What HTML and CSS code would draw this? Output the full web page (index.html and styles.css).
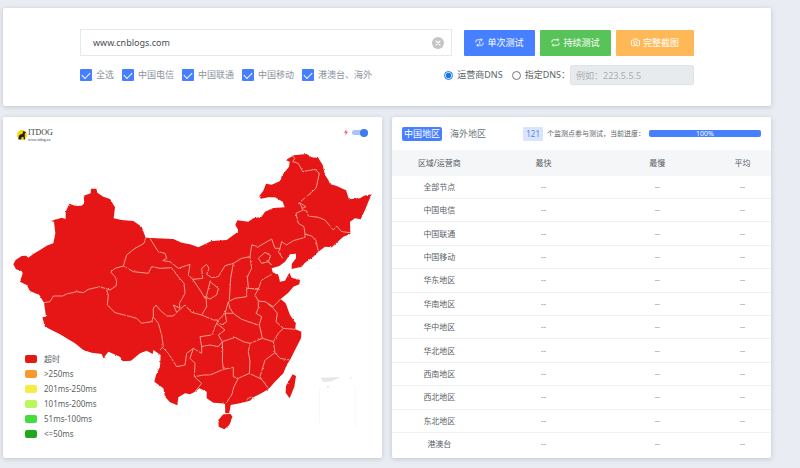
FILE: index.html
```html
<!DOCTYPE html>
<html lang="zh-CN">
<head>
<meta charset="utf-8">
<meta name="viewport" content="width=device-width, initial-scale=1">
<title>ITDOG</title>
<link rel="stylesheet" href="styles.css">
</head>
<body>
<main class="page">
  <form class="card search">
    <div class="search-row">
      <div class="url-field">
        <input class="url-input" type="text" value="www.cnblogs.com" aria-label="URL">
        <button class="clear" type="button" aria-label="clear">
          <svg viewBox="0 0 12 12"><circle cx="6" cy="6" r="6" fill="#c4c4c4"/><path d="M4 4l4 4M8 4l-4 4" stroke="#fff" stroke-width="1.1" stroke-linecap="round"/></svg>
        </button>
      </div>
      <div class="actions">
        <button class="btn btn-blue" type="button">
          <svg class="icon" viewBox="0 0 20 20"><path d="M2 10V7q0-3 3-3h11M13 1l3 3-3 3M18 10v3q0 3-3 3H4M7 19l-3-3 3-3M9 9l1.500-1v5"/></svg>单次测试</button>
        <button class="btn btn-green" type="button">
          <svg class="icon" viewBox="0 0 20 20"><path d="M2 10V7q0-3 3-3h12M14 1l3 3-3 3M18 10v3q0 3-3 3H3M6 19l-3-3 3-3"/></svg>持续测试</button>
        <button class="btn btn-orange" type="button">
          <svg class="icon" viewBox="0 0 20 20"><path d="M3 5h3l1-3h6l1 3h3q2 0 2 2v8q0 2-2 2H3q-2 0-2-2V7q0-2 2-2z"/><circle cx="10" cy="11" r="3.500"/></svg>完整截图</button>
      </div>
    </div>
    <div class="option-row">
      <div class="checks">
        <label><input type="checkbox" checked>全选</label>
        <label><input type="checkbox" checked>中国电信</label>
        <label><input type="checkbox" checked>中国联通</label>
        <label><input type="checkbox" checked>中国移动</label>
        <label><input type="checkbox" checked>港澳台、海外</label>
      </div>
      <div class="dns">
        <label><input type="radio" name="dns" checked>运营商DNS</label>
        <label><input type="radio" name="dns">指定DNS：</label>
        <input class="dns-input" type="text" placeholder="例如：223.5.5.5" aria-label="DNS" disabled>
      </div>
    </div>
  </form>

  <div class="columns">
    <section class="card map-card">
      <svg class="map" viewBox="9 351 1137 1023" aria-hidden="true">
        <defs>
          <filter id="rough" filterUnits="userSpaceOnUse" x="9" y="351" width="1137" height="1023">
            <feTurbulence type="fractalNoise" baseFrequency="0.16" numOctaves="2" seed="4" result="n"/>
            <feDisplacementMap in="SourceGraphic" in2="n" scale="6" xChannelSelector="R" yChannelSelector="G"/>
          </filter>
        </defs>
        <g filter="url(#rough)">
          <path class="land" d="M40 793L47 780 65 768 78 767 85 773 100 762 120 750 140 737 160 730 166 700 162 665 153 663 185 653 197 657 197 635 208 611 225 617 245 617 253 610 251 587 272 580 273 566 289 566 292 578 310 590 330 597 345 622 341 655 365 660 400 663 425 680 437 713 520 717 545 728 570 733 595 742 635 723 680 720 710 698 716 692 706 675 712 661 745 665 760 655 785 650 795 635 820 624 854 622 848 605 825 592 805 592 782 596 778 588 790 572 798 551 815 554 842 542 845 528 867 500 869 485 857 480 882 466 920 462 935 472 955 474 968 495 975 525 985 540 990 552 1010 558 1038 571 1047 598 1080 595 1092 587 1115 583 1105 605 1095 630 1082 658 1065 655 1050 665 1051 702 1030 710 1010 728 995 742 975 740 955 755 940 770 915 788 905 800 875 807 875 792 888 775 888 761 870 763 855 785 838 798 815 805 818 817 835 825 840 845 855 842 868 818 875 833 900 840 898 853 880 860 865 878 842 897 857 910 870 945 887 970 886 988 904 995 903 1015 890 1040 870 1080 860 1095 850 1120 825 1145 805 1168 780 1182 760 1192 750 1202 720 1210 692 1215 688 1240 676 1240 675 1212 665 1210 640 1208 620 1195 620 1175 598 1165 585 1175 570 1183 555 1180 535 1192 532 1216 510 1207 495 1190 490 1165 463 1145 468 1125 480 1100 482 1065 460 1050 458 1062 440 1052 420 1060 393 1082 368 1084 360 1070 325 1055 310 1075 305 1062 275 1058 250 1050 225 1030 180 1003 135 980 127 952 138 950 132 908 118 885 90 873 80 855 60 845 68 820 65 813 48 808Z"/>
          <path class="land" d="M655 1260L670 1243 692 1242 697 1250 688 1275 673 1288 656 1280Z"/>
          <path class="land" d="M878 1123L888 1128 883 1160 869 1195 857 1178 858 1158Z"/>
          <path class="border" d="M437 713L432 730 405 745 380 765 370 798 345 805 332 816 345 830 350 845 348 858 330 870 300 860 265 868 250 878 230 875 200 882 188 888 160 888 150 905 132 908
            M320 870L325 885 322 915 345 938 385 948 410 955 425 970 435 968 455 965 460 950 475 970 485 1005 490 1040 480 1050
            M460 950L460 925 468 915 480 930 500 948 520 948 530 937
            M370 798L400 815 445 820 455 800 480 805 515 803 535 830 552 850 555 880 538 910 540 925 520 915 530 937 555 915 575 937 605 945
            M450 715L465 740 475 755 495 760 500 775 488 782 510 785 535 805 570 793 565 825 578 838 608 835 605 805 620 793 627 805 620 823 635 833 655 830 675 797 700 790 725 775 750 770 755 735 775 740 815 717 825 745 840 745 845 725 860 735 880 722 915 712 915 702
            M915 702L912 680 895 670 888 640 910 630 920 633 925 648 955 652 975 660 1000 690 1010 678 1025 695 1050 698
            M875 466L885 475 878 485 895 490 908 515 945 508 958 520 948 565 925 585 898 608 910 630
            M898 608L918 620 905 626M915 702L935 708 948 722 955 755M840 745L835 755 848 775
            M775 775L795 757 812 767 805 785 785 790ZM805 785L815 795 800 780
            M750 770L755 805 742 830 745 865 775 867 785 840 815 823M775 867L740 865 740 890 705 895 685 905
            M700 790L692 835 688 900M775 867L765 885 775 903 795 905 820 920 842 897
            M578 838L600 870 615 895 620 885 630 845 655 865 650 885 630 897 612 890M618 890L620 920 605 945 640 960 655 960 675 940 685 905
            M685 905L690 925 700 940 675 940 680 965 665 975 650 960M700 940L725 958 775 975
            M775 903L775 925 768 940 785 950 778 975 785 1005 787 1015 820 1025 835 1000 850 985 886 988M802 910L820 925 832 940 828 965 850 985
            M655 960L650 970 675 990 655 1005 667 1025 705 1012 730 1025 750 1030 787 1015
            M650 970L635 1005 600 1010 605 1040 630 1035 655 1040 667 1025 668 1055 667 1080 670 1108 630 1125 610 1125 585 1130
            M750 1030L745 1055 750 1085 748 1120M670 1108L700 1102 700 1130 715 1135 748 1120 785 1138 805 1165
            M715 1135L702 1160 695 1185 678 1210M785 1138L780 1130 795 1080 825 1058 820 1025M825 1058L840 1075 868 1080
            M485 1040L505 1060 530 1100 555 1095 560 1060 580 1045 605 1060 605 1040M580 1045L570 1075 585 1090 583 1130 605 1150 585 1175M740 1198L755 1190 762 1198"/>
        </g>
        <path class="sea" d="M961 1133L1020 1131 998 1144 970 1146ZM981 1158h6v5h-6zM1050 1131h4v5h-4z"/>
        <path class="sea-frame" d="M959 1160v110M1066 1160v120"/>
      </svg>

      <div class="brand">
        <svg viewBox="0 0 22 22"><circle cx="11" cy="11" r="11" fill="#f4d911"/><path d="M3 21l1-8 3-3 5-1 1-5 2-2 2 2 3 1-3 3v6l1 7h-3l-1-6-4 1-1 5z" fill="#241f16"/></svg>
        <span class="brand-text"><b>ITDOG</b><small>www.itdog.cn</small></span>
      </div>

      <label class="toggle">
        <svg viewBox="0 0 6 10"><path d="M3.500 0L0 5.500h2.500L2 10l4-6H3.500z" fill="#f0606c"/></svg>
        <input type="checkbox" role="switch" aria-label="switch" checked>
      </label>

      <ul class="legend">
        <li><i class="swatch timeout"></i>超时</li>
        <li><i class="swatch over250"></i>&gt;250ms</li>
        <li><i class="swatch to250"></i>201ms-250ms</li>
        <li><i class="swatch to200"></i>101ms-200ms</li>
        <li><i class="swatch to100"></i>51ms-100ms</li>
        <li><i class="swatch to50"></i>&lt;=50ms</li>
      </ul>
    </section>

    <section class="card stats">
      <header class="stats-head">
        <nav class="tabs">
          <a class="tab active" href="#cn">中国地区</a>
          <a class="tab" href="#global">海外地区</a>
        </nav>
        <div class="progress-info">
          <span class="count">121</span>
          <span>个监测点参与测试，当前进度：</span>
          <div class="progress" role="progressbar" aria-valuenow="100">100%</div>
        </div>
      </header>
      <table>
        <thead><tr><th>区域/运营商</th><th>最快</th><th>最慢</th><th>平均</th></tr></thead>
        <tbody>
          <tr><td>全部节点</td><td>--</td><td>--</td><td>--</td></tr>
          <tr><td>中国电信</td><td>--</td><td>--</td><td>--</td></tr>
          <tr><td>中国联通</td><td>--</td><td>--</td><td>--</td></tr>
          <tr><td>中国移动</td><td>--</td><td>--</td><td>--</td></tr>
          <tr><td>华东地区</td><td>--</td><td>--</td><td>--</td></tr>
          <tr><td>华南地区</td><td>--</td><td>--</td><td>--</td></tr>
          <tr><td>华中地区</td><td>--</td><td>--</td><td>--</td></tr>
          <tr><td>华北地区</td><td>--</td><td>--</td><td>--</td></tr>
          <tr><td>西南地区</td><td>--</td><td>--</td><td>--</td></tr>
          <tr><td>西北地区</td><td>--</td><td>--</td><td>--</td></tr>
          <tr><td>东北地区</td><td>--</td><td>--</td><td>--</td></tr>
          <tr><td>港澳台</td><td>--</td><td>--</td><td>--</td></tr>
        </tbody>
      </table>
    </section>
  </div>
</main>
</body>
</html>
```
FILE: styles.css
```css
* { box-sizing: border-box; }

body {
  margin: 0;
  background: #e9edf3;
  color: #5a5f66;
  font: 9px/12px "Noto Sans", "Noto Sans CJK SC", sans-serif;
}

button, input { font: inherit; }

.page {
  display: grid;
  gap: 11px;
  padding: 8px 29px 10px 3px;
}

.card {
  background: #fff;
  border-radius: 2px;
  box-shadow: 0 1px 5px rgba(60, 75, 100, 0.25);
}

/* Search form */
.search {
  display: grid;
  gap: 9px;
  padding: 21px 77px;
}

.search-row, .option-row, .actions, .checks, .dns {
  display: flex;
  align-items: center;
}

.search-row { gap: 12px; }

.url-field {
  position: relative;
  flex: 1;
  display: flex;
}

.url-input {
  width: 100%;
  height: 27px;
  padding: 0 12px;
  border: 1px solid #e6e8eb;
  color: #4a4f57;
}

.clear {
  position: absolute;
  right: 8px;
  top: 8px;
  width: 12px;
  height: 12px;
  padding: 0;
  border: 0;
  background: none;
}

.clear svg { display: block; }

.actions { gap: 5px; }

.btn {
  display: flex;
  align-items: center;
  justify-content: center;
  gap: 3px;
  width: 71px;
  height: 26px;
  padding: 0;
  border: 0;
  border-radius: 1px;
  color: #fff;
}

.btn-blue { background: #467fff; }
.btn-green { background: #58c358; }
.btn-orange { width: 78px; background: #ffb858; }

.icon {
  width: 9px;
  height: 9px;
  fill: none;
  stroke: #fff;
  stroke-width: 2;
}

.option-row { justify-content: space-between; }
.checks { gap: 8px; color: #8b949e; }
.dns { gap: 9px; }

.checks label, .dns label {
  display: flex;
  align-items: center;
  gap: 4px;
  white-space: nowrap;
}

.dns label + .dns-input { margin-left: -9px; }

.checks input {
  appearance: none;
  display: grid;
  place-items: center;
  width: 12px;
  height: 12px;
  margin: 0;
  border-radius: 1px;
  background: #467fff;
}

.checks input::before {
  content: "";
  width: 7px;
  height: 4px;
  margin-bottom: 2px;
  border: solid #fff;
  border-width: 0 0 1px 1px;
  transform: rotate(-45deg);
}

.dns input[type="radio"] {
  width: 9px;
  height: 9px;
  margin: 0;
  accent-color: #1673f0;
}

.dns-input {
  width: 124px;
  height: 20px;
  padding: 0 5px;
  border: 1px solid #dfe3e8;
  border-radius: 2px;
  background: #e8ebee;
}

.dns-input::placeholder { color: #a8adb4; }

/* Two-column area */
.columns {
  display: grid;
  grid-template-columns: 1fr 1fr;
  gap: 10px;
}

.map-card { position: relative; }

.map {
  display: block;
  width: 100%;
}

.land { fill: #e61812; }

.border {
  fill: none;
  stroke: #f59a90;
  stroke-width: 3;
  stroke-linejoin: round;
}

.sea { fill: #e7e7e7; }
.sea-frame { fill: none; stroke: #f8f8f8; stroke-width: 3; }

.brand {
  position: absolute;
  left: 14px;
  top: 11px;
  display: flex;
  align-items: center;
  gap: 1px;
}

.brand svg { width: 10px; height: 10px; }

.brand-text {
  display: grid;
  color: #3a3a3a;
  font-family: "Liberation Serif", serif;
}

.brand-text b { font-size: 8px; line-height: 9px; font-weight: 400; }
.brand-text small { font-size: 4px; line-height: 5px; }

.toggle {
  position: absolute;
  right: 14px;
  top: 12px;
  display: flex;
  align-items: center;
  gap: 4px;
}

.toggle svg { width: 4px; height: 7px; }

.toggle input {
  appearance: none;
  display: flex;
  align-items: center;
  justify-content: flex-end;
  width: 16px;
  height: 5px;
  margin: 0;
  border-radius: 3px;
  background: #a9c3fb;
}

.toggle input::before {
  content: "";
  width: 8px;
  height: 8px;
  border-radius: 50%;
  background: #3f78f2;
}

.legend {
  position: absolute;
  left: 22px;
  bottom: 18px;
  display: grid;
  gap: 3px;
  margin: 0;
  padding: 0;
  list-style: none;
  font-size: 8px;
}

.legend li {
  display: flex;
  align-items: center;
  gap: 7px;
}

.swatch {
  width: 12px;
  height: 8px;
  border-radius: 2px;
}

.timeout { background: #e61812; }
.over250 { background: #f7992f; }
.to250 { background: #f6ec45; }
.to200 { background: #b9f75d; }
.to100 { background: #44dd3e; }
.to50 { background: #20a81c; }

/* Statistics */
.stats {
  display: grid;
  grid-template-rows: auto 1fr;
  padding-bottom: 3px;
}

.stats-head {
  display: flex;
  align-items: center;
  justify-content: space-between;
  height: 33px;
  padding: 0 10px;
}

.tabs { display: flex; gap: 6px; }

.tab {
  padding: 1px 2px;
  border-radius: 2px;
  color: #6b7178;
  text-decoration: none;
}

.tab.active { background: #467fff; color: #fff; }

.progress-info {
  display: flex;
  align-items: center;
  gap: 4px;
  font-size: 7px;
  white-space: nowrap;
}

.count {
  padding: 1px 3px;
  border-radius: 1px;
  background: #d9e5ff;
  color: #5e86dd;
  font-size: 8px;
}

.progress {
  width: 112px;
  height: 7px;
  border-radius: 2px;
  background: #467fff;
  color: #fff;
  line-height: 7px;
  text-align: center;
}

table {
  width: 100%;
  height: 100%;
  border-collapse: collapse;
  table-layout: fixed;
  font-size: 8px;
  line-height: 12px;
  text-align: center;
}

th, td { padding: 0; }
th { height: 26px; background: #f5f6f7; font-weight: 400; }
td { border-bottom: 1px solid #f0f1f3; }
tbody tr:last-child td { border-bottom: 0; }
td:not(:first-child) { color: #979ba1; }
th:nth-child(1) { width: 25%; }
th:nth-child(2) { width: 30%; }
th:nth-child(3) { width: 30%; }
th:nth-child(4) { width: 15%; }
```
